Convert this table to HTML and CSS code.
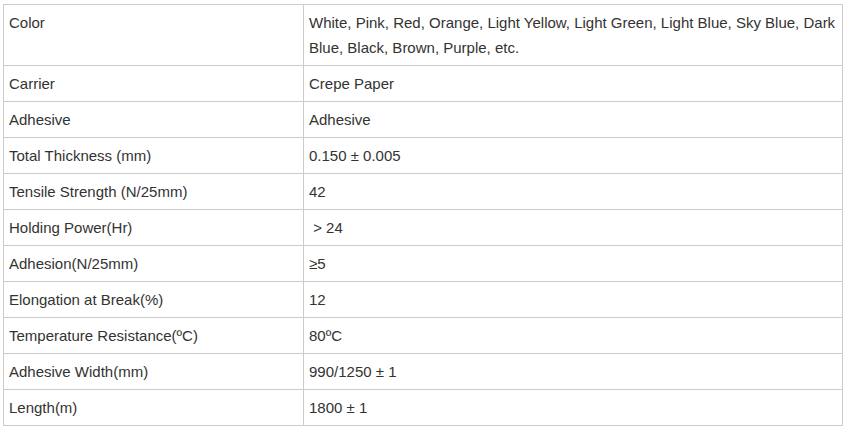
FILE: index.html
```html
<!DOCTYPE html>
<html>
<head>
<meta charset="utf-8">
<link rel="stylesheet" href="styles.css">
</head>
<body>
<table class="spec">
  <tbody>
    <tr><td class="k">Color</td><td class="v">White, Pink, Red, Orange, Light Yellow, Light Green, Light Blue, Sky Blue, Dark Blue, Black, Brown, Purple, etc.</td></tr>
    <tr><td class="k">Carrier</td><td class="v">Crepe Paper</td></tr>
    <tr><td class="k">Adhesive</td><td class="v">Adhesive</td></tr>
    <tr><td class="k">Total Thickness (mm)</td><td class="v">0.150 ± 0.005</td></tr>
    <tr><td class="k">Tensile Strength (N/25mm)</td><td class="v">42</td></tr>
    <tr><td class="k">Holding Power(Hr)</td><td class="v">&nbsp;&gt; 24</td></tr>
    <tr><td class="k">Adhesion(N/25mm)</td><td class="v">≥5</td></tr>
    <tr><td class="k">Elongation at Break(%)</td><td class="v">12</td></tr>
    <tr><td class="k">Temperature Resistance(ºC)</td><td class="v">80ºC</td></tr>
    <tr><td class="k">Adhesive Width(mm)</td><td class="v">990/1250 ± 1</td></tr>
    <tr><td class="k">Length(m)</td><td class="v">1800 ± 1</td></tr>
  </tbody>
</table>
</body>
</html>
```
FILE: styles.css
```css
html, body {
  margin: 0;
  padding: 0;
  background: #ffffff;
}
body {
  font-family: "Liberation Sans", Arial, sans-serif;
  font-size: 15px;
  color: #333333;
}
.spec {
  border-collapse: collapse;
  margin: 4px 0 0 3px;
  width: 840px;
  table-layout: fixed;
}
.spec td {
  border: 1px solid #cccccc;
  padding: 5px 5px;
  line-height: 25px;
  vertical-align: top;
  text-align: left;
}
.spec td.k {
  width: 289px;
}
```
